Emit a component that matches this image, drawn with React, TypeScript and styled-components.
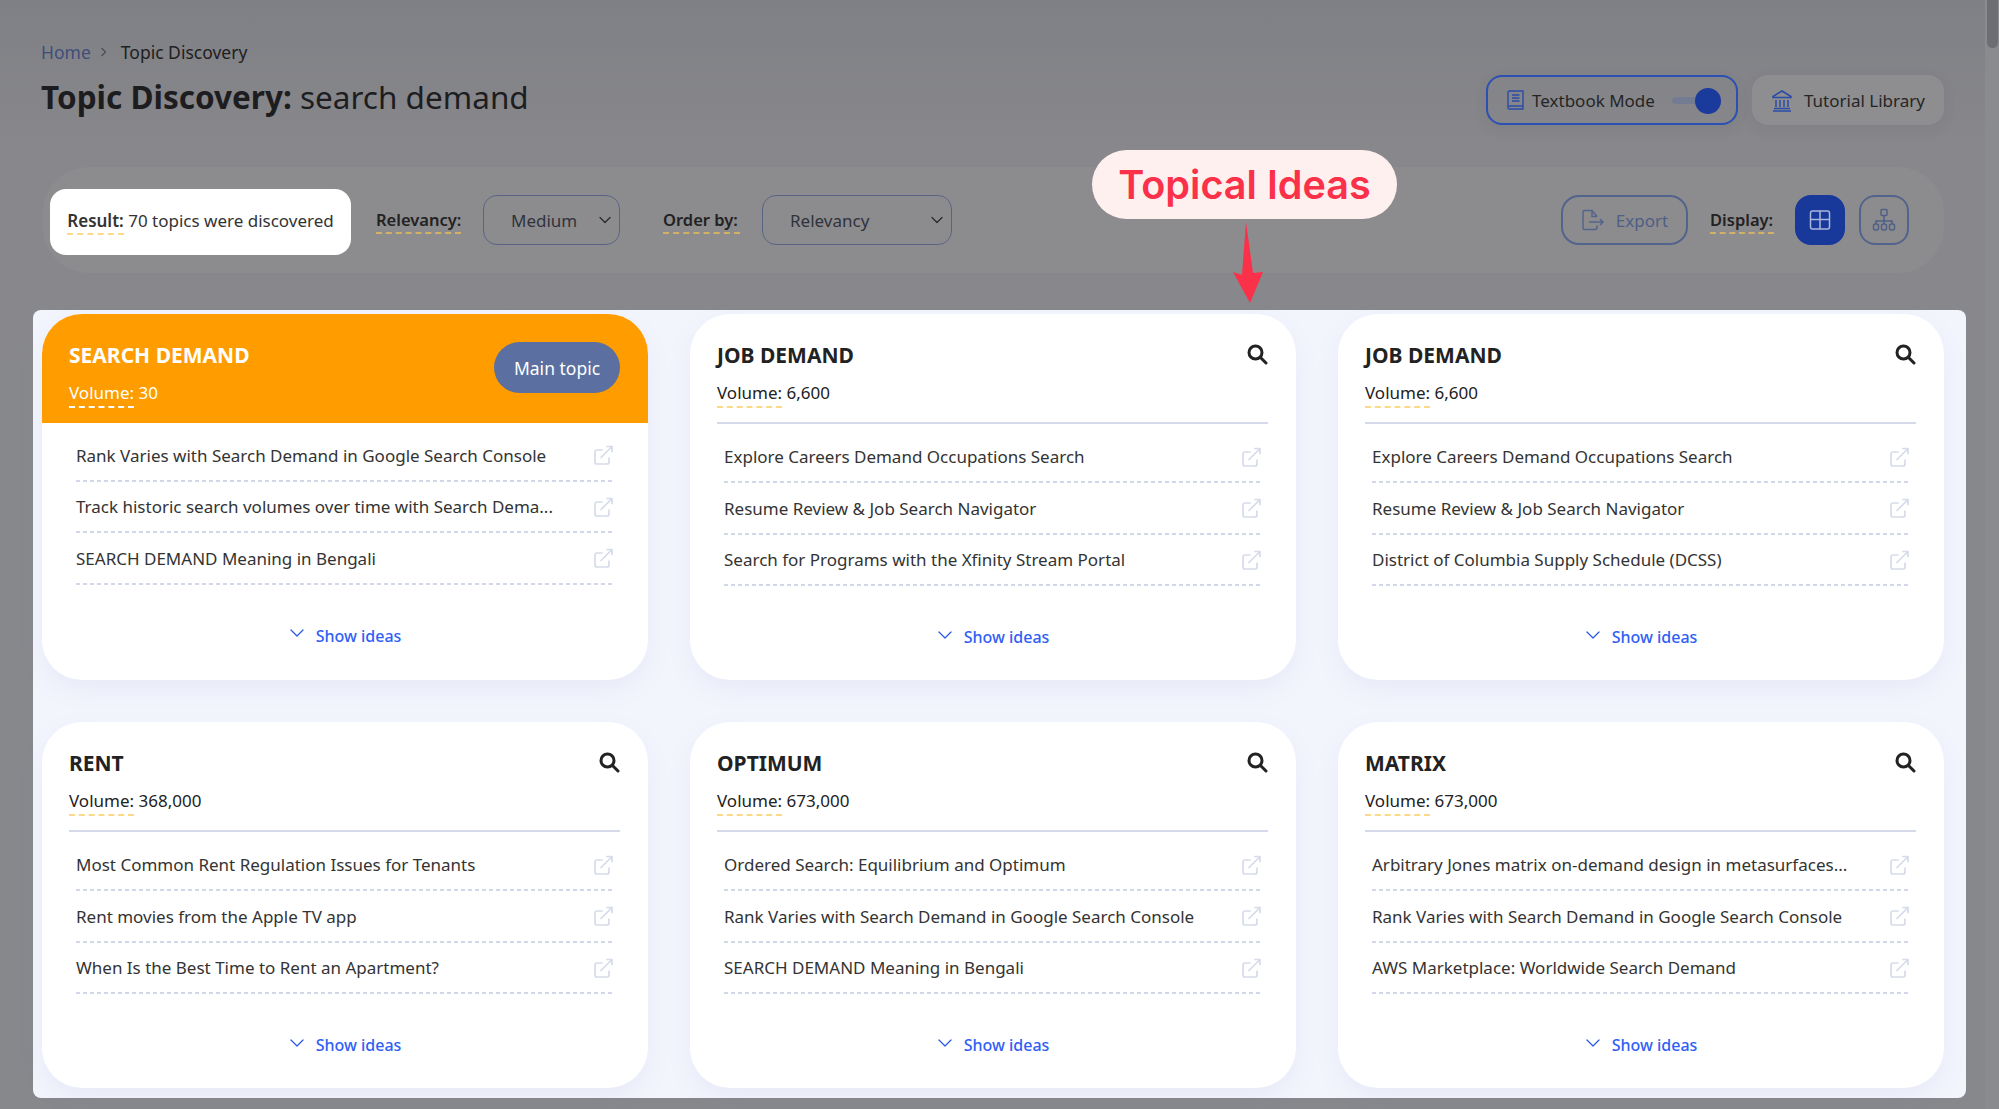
import styled, { createGlobalStyle } from 'styled-components'
import { ChevronDown } from 'lucide-react'

const GlobalStyle = createGlobalStyle`
  html, body {
    margin: 0;
    padding: 0;
    height: 100%;
    overflow: hidden;
    background: #87888c;
  }
  * {
    box-sizing: border-box;
  }
  body {
    font-family: "Noto Sans", "Open Sans", sans-serif;
    color: #2b2b2b;
  }
`

const Page = styled.div`
  position: relative;
  width: 1999px;
  height: 1109px;
  padding: 40px 55px 0 33px;
  background: linear-gradient(180deg, #7f8085 0%, #88888c 14%, #87888c 100%);
  overflow: hidden;
`

const ScrollTrack = styled.div`
  position: absolute;
  top: 0;
  right: 0;
  width: 14px;
  height: 100%;
  background: #8a8b8f;
`

const ScrollThumb = styled.div`
  width: 11px;
  height: 48px;
  margin-left: 2px;
  border-radius: 0 0 6px 6px;
  background: #6c6e74;
`

const HeaderRow = styled.div`
  display: flex;
  justify-content: space-between;
  align-items: flex-start;
  height: 127px;
  padding: 0 0 0 8px;
`

const TitleBlock = styled.div`
  display: flex;
  flex-direction: column;
  gap: 13px;
`

const Breadcrumb = styled.div`
  display: flex;
  align-items: center;
  gap: 9px;
  height: 23px;
  font-size: 17.5px;
  color: #202020;
`

const HomeLink = styled.span`
  color: #3f4e7a;
`

const CrumbArrow = styled.svg`
  width: 7px;
  height: 10px;
  margin-right: 5px;
  fill: none;
  stroke: #4a4c55;
  stroke-width: 1.2;
`

const PageTitle = styled.h1`
  margin: 0;
  font-size: 31.5px;
  line-height: 42px;
  font-weight: 400;
  color: #1d1d1f;

  b {
    font-weight: 700;
  }
`

const HeaderActions = styled.div`
  display: flex;
  gap: 14px;
  margin-top: 35px;
`

const ModeButton = styled.div<{ $active?: boolean }>`
  display: flex;
  align-items: center;
  width: ${p => (p.$active ? '252px' : '192px')};
  height: 50px;
  padding-left: 19px;
  border-radius: 16px;
  border: ${p => (p.$active ? '2px solid #2a50b4' : '0')};
  background: ${p => (p.$active ? 'transparent' : '#8e8e90')};
  box-shadow: 0 4px 14px rgba(60, 60, 70, 0.08);
  font-size: 17px;
  color: #252525;
  white-space: nowrap;
`

const BookIcon = styled.svg`
  width: 17px;
  height: 20px;
  margin-right: 8px;
  fill: none;
  stroke: #2b4ba8;
  stroke-width: 1.4;
`

const BankIcon = styled.svg`
  width: 22px;
  height: 24px;
  margin-right: 11px;
  fill: none;
  stroke: #2b4ba8;
  stroke-width: 1.5;
`

const ToggleTrack = styled.div`
  position: relative;
  width: 49px;
  height: 7px;
  margin-left: 17px;
  border-radius: 4px;
  background: #747c94;
`

const ToggleThumb = styled.div`
  position: absolute;
  top: -9px;
  right: 0;
  width: 26px;
  height: 26px;
  border-radius: 50%;
  background: #1a3a9c;
`

const FilterBar = styled.div`
  display: flex;
  align-items: center;
  height: 106px;
  margin-left: 10px;
  padding: 0 35px 0 7px;
  border-radius: 46px;
  background: #8c8c8e;
  font-size: 17px;
`

const ResultCard = styled.div`
  display: flex;
  align-items: center;
  justify-content: center;
  width: 301px;
  height: 66px;
  margin: 3px 25px 0 0;
  padding-bottom: 2px;
  border-radius: 16px;
  background: #fff;
  color: #333;
  white-space: nowrap;
`

const Dotted = styled.span<{ $color?: string }>`
  font-weight: 600;
  padding-bottom: 1px;
  border-bottom: 2px dashed ${p => p.$color ?? '#d2b066'};
`

const FilterLabel = styled(Dotted)<{ $width: number }>`
  width: ${p => p.$width}px;
  margin-top: 2px;
  font-size: 16.5px;
  color: #222;
  white-space: nowrap;
`

const SelectBox = styled.div<{ $width: number }>`
  display: flex;
  align-items: center;
  justify-content: space-between;
  width: ${p => p.$width}px;
  height: 50px;
  margin: 0 43px 0 22px;
  padding: 0 4px 0 27px;
  border: 1.5px solid #5a6585;
  border-radius: 14px;
  color: #30333c;
`

const SelectChevron = styled(ChevronDown)`
  width: 20px;
  height: 20px;
  color: #2b2b2b;
`

const Spacer = styled.div`
  flex: 1;
`

const ExportButton = styled.div`
  display: flex;
  align-items: center;
  justify-content: center;
  gap: 11px;
  width: 127px;
  height: 50px;
  margin-right: 22px;
  border: 2px solid #53648c;
  border-radius: 18px;
  color: #4e5f86;
`

const ExportIcon = styled.svg`
  width: 24px;
  height: 22px;
  fill: none;
  stroke: #53648c;
  stroke-width: 1.5;
`

const ViewButton = styled.div<{ $active?: boolean }>`
  display: flex;
  align-items: center;
  justify-content: center;
  width: 50px;
  height: 50px;
  margin-left: ${p => (p.$active ? '21px' : '14px')};
  border-radius: 16px;
  border: 2px solid ${p => (p.$active ? '#18389a' : '#53648c')};
  background: ${p => (p.$active ? '#18389a' : 'transparent')};
`

const ViewIcon = styled.svg<{ $light?: boolean }>`
  width: 24px;
  height: 24px;
  fill: none;
  stroke: ${p => (p.$light ? '#a9b6dc' : '#4e5f86')};
  stroke-width: 1.5;
`

const Panel = styled.main`
  width: 1933px;
  height: 788px;
  margin: 37px 0 0 0;
  padding: 4px 22px 0 8.5px;
  border-radius: 8px;
  background: #f3f5fd;
`

const CardGrid = styled.div`
  display: grid;
  grid-template-columns: repeat(3, 606px);
  grid-auto-rows: 366px;
  column-gap: 42px;
  row-gap: 42px;
`

const Card = styled.article`
  display: flex;
  flex-direction: column;
  overflow: hidden;
  border-radius: 40px;
  background: #fff;
  box-shadow: 0 10px 24px rgba(120, 130, 190, 0.09);
`

const CardHeader = styled.header<{ $main?: boolean }>`
  display: flex;
  justify-content: space-between;
  height: ${p => (p.$main ? '109px' : '110px')};
  padding: ${p => (p.$main ? '27px 27.5px 0' : '27px 0 0')};
  margin: ${p => (p.$main ? '0' : '0 27.5px')};
  color: ${p => (p.$main ? '#fff' : '#222')};
  background: ${p => (p.$main ? '#ff9c00' : 'transparent')};
  border-bottom: ${p => (p.$main ? '0' : '2px solid #d5d9ea')};
`

const CardHeading = styled.div`
  display: flex;
  flex-direction: column;
  gap: 9.5px;
`

const CardTitle = styled.h2`
  margin: 0;
  font-size: 21px;
  line-height: 29px;
  font-weight: 700;
`

const VolumeLine = styled.div`
  font-size: 17px;
  line-height: 25px;
`

const VolumeLabel = styled.span<{ $main?: boolean }>`
  padding-bottom: 2px;
  border-bottom: 2px dashed ${p => (p.$main ? '#fff' : '#fbd988')};
`

const MainPill = styled.div`
  display: flex;
  align-items: center;
  justify-content: center;
  width: 126px;
  height: 51px;
  margin: 1px 0 0;
  border-radius: 26px;
  background: #5b6fa1;
  color: #fff;
  font-size: 17.5px;
`

const SearchIcon = styled.svg`
  width: 21px;
  height: 21px;
  margin-top: 3px;
  fill: none;
  stroke: #222;
  stroke-width: 3;
  stroke-linecap: round;
`

const IdeaList = styled.ul<{ $main?: boolean }>`
  margin: 0;
  padding: ${p => (p.$main ? '7px' : '7.5px')} 34.5px 0;
  list-style: none;
`

const IdeaRow = styled.li`
  display: flex;
  align-items: center;
  justify-content: space-between;
  height: 51.5px;
  padding-bottom: 1px;
  background: repeating-linear-gradient(90deg, #d2d8ea 0 4px, transparent 4px 7px) left bottom / 100% 2px no-repeat;
  font-size: 17px;
  color: #333;
  white-space: nowrap;
`

const OutIcon = styled.svg`
  width: 19px;
  height: 20px;
  fill: none;
  stroke: #d6dbea;
  stroke-width: 1.7;
  stroke-linecap: round;
  stroke-linejoin: round;
`

const ShowIdeas = styled.div`
  display: flex;
  align-items: center;
  justify-content: center;
  gap: 7px;
  margin: 40px 3px 0 0;
  font-size: 16px;
  font-weight: 500;
  color: #2f60f5;
`

const IdeasChevron = styled(ChevronDown)`
  width: 24px;
  height: 24px;
  margin-top: -5px;
  color: #2a5ce0;
`

const Bubble = styled.div`
  position: absolute;
  left: 1092px;
  top: 150px;
  display: flex;
  align-items: center;
  justify-content: center;
  width: 305px;
  height: 69px;
  border-radius: 35px;
  background: #fff0f0;
  color: #fb3049;
  font-family: Inter, "Noto Sans", sans-serif;
  font-size: 39.6px;
  font-weight: 600;
  white-space: nowrap;
`

const BubbleArrow = styled.svg`
  position: absolute;
  left: 1230px;
  top: 220px;
  width: 36px;
  height: 84px;
  fill: #fb3049;
`

const cards = [
  {
    title: 'SEARCH DEMAND',
    volume: '30',
    main: true,
    ideas: [
      'Rank Varies with Search Demand in Google Search Console',
      'Track historic search volumes over time with Search Dema...',
      'SEARCH DEMAND Meaning in Bengali'
    ]
  },
  {
    title: 'JOB DEMAND',
    volume: '6,600',
    ideas: [
      'Explore Careers Demand Occupations Search',
      'Resume Review & Job Search Navigator',
      'Search for Programs with the Xfinity Stream Portal'
    ]
  },
  {
    title: 'JOB DEMAND',
    volume: '6,600',
    ideas: [
      'Explore Careers Demand Occupations Search',
      'Resume Review & Job Search Navigator',
      'District of Columbia Supply Schedule (DCSS)'
    ]
  },
  {
    title: 'RENT',
    volume: '368,000',
    ideas: [
      'Most Common Rent Regulation Issues for Tenants',
      'Rent movies from the Apple TV app',
      'When Is the Best Time to Rent an Apartment?'
    ]
  },
  {
    title: 'OPTIMUM',
    volume: '673,000',
    ideas: [
      'Ordered Search: Equilibrium and Optimum',
      'Rank Varies with Search Demand in Google Search Console',
      'SEARCH DEMAND Meaning in Bengali'
    ]
  },
  {
    title: 'MATRIX',
    volume: '673,000',
    ideas: [
      'Arbitrary Jones matrix on-demand design in metasurfaces...',
      'Rank Varies with Search Demand in Google Search Console',
      'AWS Marketplace: Worldwide Search Demand'
    ]
  }
]

const OutLink = () => (
  <OutIcon viewBox="0 0 19 20">
    <path d="M8 5H3a2 2 0 0 0-2 2v10a2 2 0 0 0 2 2h10a2 2 0 0 0 2-2v-4" />
    <path d="M7 12.500 17.500 2M13 1.500h5v5" />
  </OutIcon>
)

export default function App() {
  return (
    <>
      <GlobalStyle />
      <Page>
        <HeaderRow>
          <TitleBlock>
            <Breadcrumb>
              <HomeLink>Home</HomeLink>
              <CrumbArrow viewBox="0 0 7 10">
                <path d="M1.500 1l4 4-4 4" />
              </CrumbArrow>
              Topic Discovery
            </Breadcrumb>
            <PageTitle>
              <b>Topic Discovery:</b> search demand
            </PageTitle>
          </TitleBlock>
          <HeaderActions>
            <ModeButton $active>
              <BookIcon viewBox="0 0 17 20">
                <path d="M1 16.500V2.500A1.500 1.500 0 0 1 2.500 1H16v15H2.500A1.500 1.500 0 0 0 1 17.500 1.500 1.500 0 0 0 2.500 19H16v-3" />
                <path d="M5 5h7.500M5 8h7.500M5 11h7.500" />
              </BookIcon>
              Textbook Mode
              <ToggleTrack>
                <ToggleThumb />
              </ToggleTrack>
            </ModeButton>
            <ModeButton>
              <BankIcon viewBox="0 0 22 24">
                <path d="M2 8.500 11 3l9 5.500v1H2z" />
                <path d="M5 12v7M9 12v7M13 12v7M17 12v7M3 20.500h16M2 23h18" />
              </BankIcon>
              Tutorial Library
            </ModeButton>
          </HeaderActions>
        </HeaderRow>

        <FilterBar>
          <ResultCard>
            <span>
              <Dotted $color="#fbd988">Result:</Dotted> 70 topics were discovered
            </span>
          </ResultCard>
          <FilterLabel $width={85}>Relevancy:</FilterLabel>
          <SelectBox $width={137}>
            Medium
            <SelectChevron strokeWidth={1.5} />
          </SelectBox>
          <FilterLabel $width={77}>Order by:</FilterLabel>
          <SelectBox $width={190}>
            Relevancy
            <SelectChevron strokeWidth={1.5} />
          </SelectBox>
          <Spacer />
          <ExportButton>
            <ExportIcon viewBox="0 0 24 22">
              <path d="M16 7.500 11 1.500H3.500a1.500 1.500 0 0 0-1.500 1.500v16a1.500 1.500 0 0 0 1.500 1.500H14a2 2 0 0 0 2-2v-2" />
              <path d="M11 1.500V7.500h5M8 13h14M19 10l3 3-3 3" />
            </ExportIcon>
            Export
          </ExportButton>
          <FilterLabel $width={64}>Display:</FilterLabel>
          <ViewButton $active>
            <ViewIcon $light viewBox="0 0 24 24">
              <rect x="2.500" y="3" width="19" height="18" rx="2" />
              <path d="M12 3v18M2.500 11.500h19" />
            </ViewIcon>
          </ViewButton>
          <ViewButton>
            <ViewIcon viewBox="0 0 24 24">
              <rect x="9" y="1.500" width="6" height="6" rx="1" />
              <path d="M12 7.500V13M4 16v-3h16v3M12 13v3" />
              <rect x="1.500" y="16" width="5" height="6" rx="2" />
              <rect x="9.500" y="16" width="5" height="6" rx="2" />
              <rect x="17.500" y="16" width="5" height="6" rx="2" />
            </ViewIcon>
          </ViewButton>
        </FilterBar>

        <Panel>
          <CardGrid>
            {cards.map((card, i) => (
              <Card key={i}>
                <CardHeader $main={card.main}>
                  <CardHeading>
                    <CardTitle>{card.title}</CardTitle>
                    <VolumeLine>
                      <VolumeLabel $main={card.main}>Volume:</VolumeLabel> {card.volume}
                    </VolumeLine>
                  </CardHeading>
                  {card.main ? (
                    <MainPill>Main topic</MainPill>
                  ) : (
                    <SearchIcon viewBox="0 0 21 21">
                      <circle cx="8.500" cy="8.500" r="6.500" />
                      <path d="M13.500 13.500 19 19" />
                    </SearchIcon>
                  )}
                </CardHeader>
                <IdeaList $main={card.main}>
                  {card.ideas.map(idea => (
                    <IdeaRow key={idea}>
                      {idea}
                      <OutLink />
                    </IdeaRow>
                  ))}
                </IdeaList>
                <ShowIdeas>
                  <IdeasChevron strokeWidth={1.3} />
                  Show ideas
                </ShowIdeas>
              </Card>
            ))}
          </CardGrid>
        </Panel>

        <Bubble>Topical Ideas</Bubble>
        <BubbleArrow viewBox="0 0 36 84">
          <path d="M16 2 23 53 33 52 20 83 3 52 12 55z" />
        </BubbleArrow>
        <ScrollTrack>
          <ScrollThumb />
        </ScrollTrack>
      </Page>
    </>
  )
}
